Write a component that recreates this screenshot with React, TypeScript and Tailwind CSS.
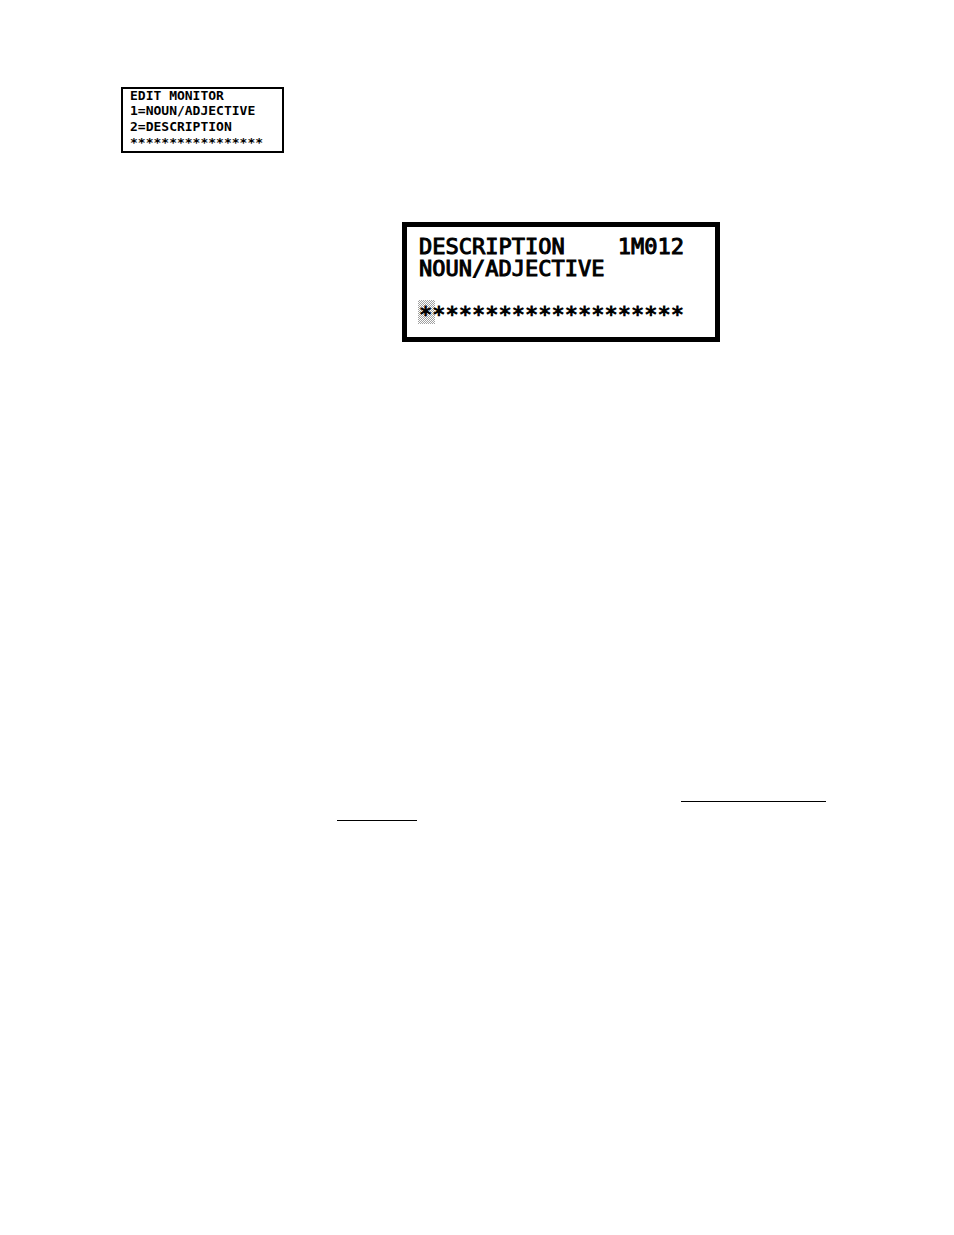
const stars = (count: number) => "*".repeat(count)

function MenuDisplay() {
  return (
    <section
      aria-label="Edit monitor menu"
      className="w-fit min-w-[163px] border-2 border-black pb-px pl-[7px] text-[13px] leading-[15px] font-bold whitespace-pre"
    >
      <p className="-mt-px">EDIT MONITOR</p>
      <p className="leading-4">1=NOUN/ADJECTIVE</p>
      <p>2=DESCRIPTION</p>
      <p className="pt-px">{stars(17)}</p>
    </section>
  )
}

function DescriptionDisplay() {
  return (
    <section
      aria-label="Monitor description"
      className="w-fit min-w-[318px] border-[5px] border-black px-3 pt-[9px] pb-[7px] text-[22px] leading-[22px] whitespace-pre [-webkit-text-stroke:1px_black]"
    >
      <p>{"DESCRIPTION    1M012"}</p>
      <p>NOUN/ADJECTIVE</p>
      <p className="mt-5 leading-[30px]">
        {/* Dithered cell marks the cursor */}
        <span className="-mr-[3px] -ml-px inline-block h-6 bg-[conic-gradient(#a0a0a0_25%,white_0_50%,#a0a0a0_0_75%,white_0)] bg-[length:2px_2px] pr-[3px] pl-px align-top">
          *
        </span>
        {stars(19)}
      </p>
    </section>
  )
}

export default function App() {
  return (
    <main className="min-h-screen bg-white pt-[87px] pr-32 pl-[121px] font-['DejaVu_Sans_Mono',monospace] text-black">
      <MenuDisplay />

      <div className="mt-[69px] ml-[281px]">
        <DescriptionDisplay />
      </div>

      {/* Blank lines to fill in */}
      <div className="mt-[459px] ml-[216px]">
        <hr className="ml-auto w-[145px] border-t border-black" />
        <hr className="mt-[18px] w-20 border-t border-black" />
      </div>
    </main>
  )
}
